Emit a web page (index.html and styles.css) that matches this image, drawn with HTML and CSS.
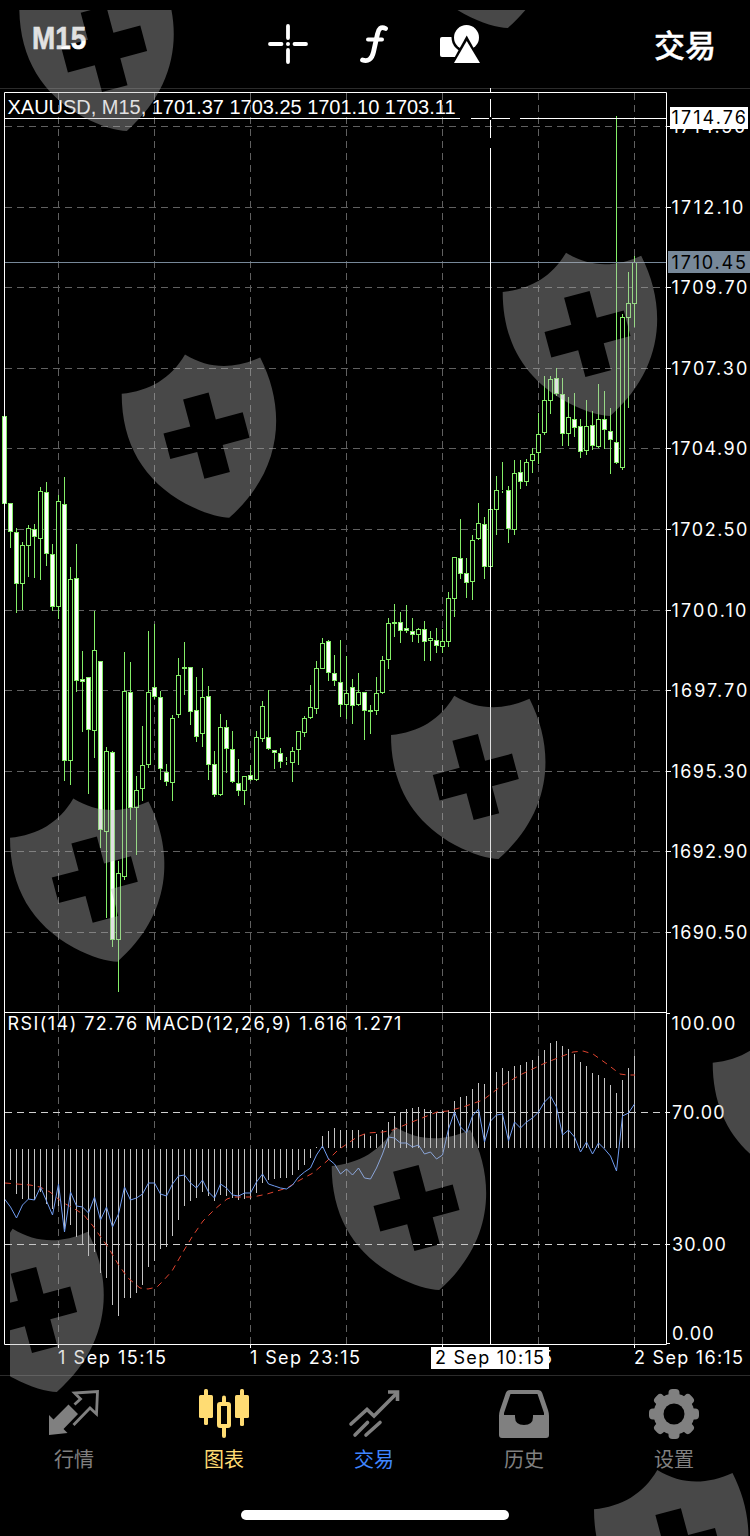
FILE: index.html
```html
<!DOCTYPE html>
<html lang="zh-CN">
<head>
    <meta charset="UTF-8">
    <meta name="viewport" content="width=device-width, initial-scale=1.0">
    <title>XAUUSD M15</title>
    <link rel="stylesheet" href="styles.css">
</head>
<body>
    <div class="app">
        <header class="header">
            <div class="timeframe">M15</div>
            <div class="tools">
                <svg class="tool-icon" width="40" height="40" viewBox="0 0 40 40">
                    <g stroke="#fff" stroke-width="3.8" stroke-linecap="round">
                        <path d="M20 1.9V14M20 26V38M2 20H13.5M26.5 20H38"/>
                    </g>
                    <circle cx="20" cy="20" r="2" fill="#fff"/>
                </svg>
                <svg class="tool-icon" width="30" height="40" viewBox="0 0 30 40">
                    <g fill="none" stroke="#fff" stroke-width="4.8" stroke-linecap="round">
                        <path d="M26.500 4.500C22 2 19.500 5 18.500 10L14.500 28C13 35 9 38 3.500 36"/>
                        <path d="M9 15.500H23" stroke-width="4"/>
                    </g>
                </svg>
                <svg class="tool-icon" width="42" height="40" viewBox="0 0 42 40">
                    <rect x="1" y="13" width="20" height="20" rx="2" fill="#fff"/>
                    <circle cx="27.500" cy="13.500" r="15" fill="#000"/>
                    <circle cx="27.500" cy="13.500" r="12.500" fill="#fff"/>
                    <path d="M27.700 11.500L43 39H12.500Z" fill="#000"/>
                    <path d="M27.700 17L41 39H15Z" fill="#fff"/>
                </svg>
            </div>
            <div class="trade">交易</div>
        </header>

        <main class="chart-area">
            <svg id="chart" class="chart" width="750" height="1286" viewBox="0 89 750 1286"></svg>
        </main>

        <nav class="tabs">
            <div class="tab">
                <svg width="52" height="50" viewBox="0 0 52 50">
                    <path d="M1 26L5.500 30.500L20.500 15.500L30 25L15.500 40L19.500 44L1 46Z" fill="#808080"/>
                    <path d="M26.500 15.500L32.500 10L26.500 4L49.500 2.500L48.500 25L42 19L25.500 36" fill="none" stroke="#808080" stroke-width="2.800"/>
                </svg>
                <span>行情</span>
            </div>
            <div class="tab active">
                <svg width="52" height="50" viewBox="0 0 52 50" fill="#ffdc73">
                    <rect x="1" y="6" width="14" height="23" rx="1.500"/>
                    <rect x="6" y="0" width="4" height="36" rx="1.500"/>
                    <rect x="37" y="6" width="14" height="23" rx="1.500"/>
                    <rect x="42" y="0" width="4" height="37" rx="1.500"/>
                    <path d="M24 8.500a2 2 0 0 1 4 0V47a2 2 0 0 1-4 0Z"/>
                    <rect x="21" y="15" width="10" height="22" rx="1" fill="#000" stroke="#ffdc73" stroke-width="4"/>
                </svg>
                <span>图表</span>
            </div>
            <div class="tab blue">
                <svg width="52" height="50" viewBox="0 0 52 50">
                    <g fill="none" stroke="#808080" stroke-width="3.600" stroke-linecap="round">
                        <path d="M3 35L19 20.500L26 27L49 4"/>
                        <path d="M40 3H49.500V12" stroke-linecap="butt"/>
                        <path d="M7 46L19.500 33.500M18 46L32 33.500"/>
                    </g>
                </svg>
                <span>交易</span>
            </div>
            <div class="tab">
                <svg width="52" height="50" viewBox="0 0 52 50">
                    <path fill="#808080" fill-rule="evenodd" d="M12 1H40Q43 1 44.200 4L50 21Q51 24 51 27V46Q51 49 48 49H4Q1 49 1 46V27Q1 24 2 21L7.800 4Q9 1 12 1ZM12.500 5L6 24V26H17V28Q17 36 26 36Q35 36 35 28V26H46V24L39.500 5Z"/>
                </svg>
                <span>历史</span>
            </div>
            <div class="tab">
                <svg id="gear" width="52" height="50" viewBox="0 0 52 50"></svg>
                <span>设置</span>
            </div>
        </nav>
        <div class="home-indicator"></div>

        <svg class="shields" width="750" height="1536" viewBox="0 0 750 1536">
            <defs>
                <clipPath id="edge"><rect x="10" y="10" width="740" height="1526"/></clipPath>
                <path id="shield" fill-rule="evenodd" d="M0 0C28-3 49-15 63.300-39.300C87-25 111-24 138.500-36.300C165 16 161 77 107.500 124C98 124 81 119 64 110C22 87 0 50 0 0ZM61.400 5.700L86.900-1.100L94.100 25.800L121 18.600L127.800 44.100L101 51.300L108.200 78.200L82.700 85L75.500 58.200L48.600 65.400L41.800 39.900L68.600 32.700Z"/>
            </defs>
            <g id="shieldLayer" clip-path="url(#edge)"></g>
        </svg>
    </div>

    <script>
        // [high, body top, body bottom, low, filled]
        const candles = [
            [416,416,503,503,1],[503,503,531,547,1],[528,532,583,612,1],[542,545,583,609,0],
            [525,528,545,576,0],[524,529,536,577,1],[487,491,538,579,0],[482,492,553,565,1],
            [544,554,606,610,1],[495,501,606,618,0],[477,504,760,780,1],[567,579,760,784,0],
            [544,578,680,691,1],[651,679,681,731,1],[677,677,729,793,1],[611,650,730,757,0],
            [661,661,829,847,1],[747,751,831,917,0],[751,752,939,946,1],[861,873,939,991,0],
            [652,691,876,879,0],[662,692,807,819,1],[776,790,807,854,0],[726,765,788,800,0],
            [631,692,764,767,0],[624,687,696,698,1],[691,697,768,779,1],[764,772,781,785,1],
            [715,718,782,800,0],[658,675,714,717,0],[642,667,668,694,1],[667,667,711,724,1],
            [677,710,736,741,1],[668,697,733,746,0],[686,696,764,779,1],[751,764,794,796,1],
            [714,727,794,795,0],[720,727,748,772,1],[731,749,781,782,1],[759,783,790,795,1],
            [776,776,790,804,0],[765,775,779,780,1],[731,737,779,780,0],[701,706,738,741,0],
            [690,737,748,749,1],[750,750,752,768,1],[748,753,761,767,1],[757,761,761,764,1],
            [747,751,762,781,0],[731,731,749,764,0],[716,718,732,736,0],[685,707,717,718,0],
            [661,668,708,713,0],[638,643,668,668,0],[640,641,672,680,1],[655,673,680,685,1],
            [640,682,704,716,1],[656,693,704,718,0],[679,687,705,723,1],[673,692,704,705,0],
            [692,692,710,739,1],[705,710,711,733,1],[677,693,710,714,0],[656,660,692,693,0],
            [618,623,659,668,0],[604,622,623,636,1],[612,622,630,642,1],[605,628,630,632,1],
            [618,631,634,641,1],[628,629,634,642,0],[621,629,641,660,1],[631,638,640,660,0],
            [628,640,645,652,1],[629,641,646,652,0],[592,598,641,646,0],[557,557,598,616,0],
            [519,558,573,578,1],[558,573,582,597,1],[535,540,581,599,0],[503,523,538,539,0],
            [517,524,566,578,1],[509,509,566,567,0],[476,490,509,534,0],[462,490,490,492,1],
            [486,490,528,542,1],[460,473,529,534,0],[460,472,481,488,1],[459,462,481,485,0],
            [448,454,460,472,0],[413,434,452,463,0],[376,400,432,434,0],[376,379,400,413,0],
            [368,378,393,395,1],[378,394,433,445,1],[397,417,433,445,0],[393,419,427,436,1],
            [419,426,451,457,1],[400,426,450,454,0],[411,425,445,449,1],[384,419,446,447,0],
            [391,419,429,448,1],[408,431,439,473,1],[116,442,462,463,1],[314,317,467,469,0],
            [272,303,317,407,0],[256,262,303,326,0]
        ];

        const rsi = [
            1199,1207,1218,1205,1199,1200,1187,1201,1215,1184,1232,1192,1206,1207,1213,1197,1220,1207,
            1227,1214,1187,1200,1198,1194,1183,1183,1194,1196,1184,1176,1175,1183,1188,1180,1192,1198,
            1184,1188,1195,1196,1193,1193,1182,1174,1184,1186,1188,1189,1185,1177,1172,1168,1155,1146,
            1159,1164,1174,1169,1175,1168,1178,1179,1168,1154,1137,1138,1143,1143,1147,1145,1154,1152,
            1159,1155,1129,1112,1127,1133,1116,1109,1142,1121,1115,1114,1141,1122,1128,1122,1118,1112,
            1102,1096,1107,1135,1130,1137,1152,1142,1154,1143,1149,1156,1171,1116,1113,1104
        ];

        // ends of the MACD bars, first bar is the second candle
        const macd = [
            1180,1194,1199,1199,1200,1192,1204,1209,1206,1229,1225,1237,1244,1256,1252,1273,1278,1305,
            1316,1298,1298,1293,1285,1267,1261,1249,1247,1236,1220,1206,1201,1198,1192,1196,1201,1195,
            1196,1198,1200,1199,1199,1193,1183,1180,1179,1178,1178,1175,1170,1165,1158,1147,1136,1131,
            1128,1130,1130,1130,1130,1134,1136,1134,1130,1122,1116,1112,1109,1108,1107,1109,1110,1112,
            1111,1110,1101,1097,1096,1089,1083,1084,1078,1072,1068,1071,1066,1065,1062,1060,1056,1050,
            1043,1041,1046,1049,1054,1062,1066,1073,1075,1078,1085,1093,1080,1068,1056
        ];

        const signal = [
            [5,1183],[17,1184],[30,1185],[40,1187],[50,1192],[62,1202],[73,1208],[83,1214],[93,1226],
            [100,1236],[108,1247],[118,1264],[128,1278],[140,1288],[148,1289],[157,1287],[163,1281],
            [172,1271],[183,1252],[192,1237],[203,1221],[215,1209],[227,1199],[233,1197],[253,1197],
            [267,1194],[287,1188],[300,1180],[313,1173],[327,1161],[338,1150],[347,1144],[357,1137],
            [367,1133],[383,1132],[393,1130],[407,1124],[427,1116],[437,1112],[448,1111],[463,1107],
            [483,1100],[500,1087],[520,1075],[543,1064],[560,1057],[573,1052],[583,1051],[593,1054],
            [607,1064],[620,1074],[627,1075],[635,1075]
        ];

        // [y, text, text width]
        const prices = [
            [126.5, '1714.50', 75], [207.5, '1712.10', 73], [287.5, '1709.70', 77], [368.5, '1707.30', 77],
            [448.5, '1704.90', 77], [529.5, '1702.50', 77], [610.5, '1700.10', 76], [690.5, '1697.70', 77],
            [771.5, '1695.30', 77], [851.5, '1692.90', 77], [932.5, '1690.50', 77]
        ];
        const columns = [58.5, 154.5, 250.5, 346.5, 442.5, 538.5, 634.5];
        const times = [
            [58.5, '1 Sep 15:15', 109], [250.5, '1 Sep 23:15', 111],
            [442.5, '2 Sep 08:15', 111], [634.5, '2 Sep 16:15', 110]
        ];

        const candleX = i => 4.5 + i * 6;
        const path = (cls, d) => `<path class="${cls}" d="${d}"/>`;
        const label = (cls, x, y, text, width) =>
            `<text class="${cls}" x="${x}" y="${y}"${width ? ` textLength="${width}"` : ''}>${text}</text>`;

        function drawGrid() {
            let out = '';
            prices.forEach(p => out += path('grid', `M5 ${p[0]}H666`));
            columns.forEach(x => out += path('grid', `M${x} 93V1012`) + path('grid', `M${x} 1013V1344`));
            out += path('level', 'M5 1112.5H666') + path('level', 'M5 1244.5H666');
            return out;
        }

        function drawCandles() {
            return candles.map((c, i) => {
                const x = candleX(i);
                const [high, top, bottom, low, filled] = c;
                const wick = path('wick', `M${x} ${high}V${top}M${x} ${bottom + 1}V${low + 1}`);
                return wick + `<rect class="${filled ? 'bear' : 'bull'}" x="${x - 2}" y="${top + 0.5}" width="4" height="${bottom - top}"/>`;
            }).join('');
        }

        function drawIndicators() {
            let bars = '';
            macd.forEach((y, i) => {
                bars += `M${candleX(i + 1)} ${y < 1149 ? 1148 : 1149}V${y}`;
            });
            return path('macd', bars) +
                path('signal', 'M' + signal.map(p => p.join(' ')).join('L')) +
                path('rsi', 'M' + rsi.map((y, i) => `${candleX(i)} ${y}`).join('L'));
        }

        function drawAxes() {
            let out = path('frame', 'M4.5 92.5H666.5V1344.5H4.5ZM4.5 1012.5H666.5');
            prices.forEach(p => {
                out += path('frame', `M667 ${p[0]}H671`) + label('axis', 671.5, p[0] + 6.5, p[1], p[2]);
            });
            out += path('frame', 'M667 1013.5H670M667 1112.5H670M667 1244.5H670M667 1343.5H670');
            out += label('axis', 671.5, 1030, '100.00', 65) + label('axis', 672, 1119, '70.00');
            out += label('axis', 672, 1251, '30.00') + label('axis', 672, 1340, '0.00');
            times.forEach(t => {
                out += path('frame', `M${t[0]} 1345V1348`) + label('axis', t[0] - 0.5, 1364, t[1], t[2]);
            });
            return out;
        }

        function drawMarkers() {
            let out = path('price-line', 'M5 262.5H666');
            out += path('frame', 'M5 118.5H460M471 118.5H489M492 118.5H510M520 118.5H666');
            out += path('frame', 'M490.5 88V92M490.5 99V117M490.5 120V138M490.5 148V1344');
            out += '<rect x="670" y="107" width="78" height="22" fill="#fff"/>';
            out += label('axis dark', 671.5, 124, '1714.76', 75.5);
            out += '<rect x="668" y="251" width="82" height="22" fill="#778899"/>';
            out += label('axis dark', 671.5, 269, '1710.45', 75.5);
            out += '<rect x="431" y="1347" width="118" height="22" fill="#fff"/>';
            out += label('axis dark', 435, 1364, '2 Sep 10:15', 110);
            return out;
        }

        function drawTitles() {
            return label('symbol', 7.5, 114, 'XAUUSD, M15, 1701.37 1703.25 1701.10 1703.11', 448) +
                label('axis', 7.5, 1030, 'RSI(14) 72.76 MACD(12,26,9) 1.616 1.271', 395);
        }

        document.getElementById('chart').innerHTML =
            drawGrid() + drawIndicators() + drawCandles() + drawAxes() + drawMarkers() + drawTitles();

        // gear with eight round teeth
        let gear = '<circle cx="26" cy="25" r="20.5" fill="#808080"/>';
        for (let i = 0; i < 8; i++) {
            gear += `<rect x="20.5" y="0" width="11" height="12" rx="4" fill="#808080" transform="rotate(${i * 45} 26 25)"/>`;
        }
        gear += '<circle cx="26" cy="25" r="10.5" fill="#000"/>';
        document.getElementById('gear').innerHTML = gear;

        const shields = [
            [19.3, 7], [400.3, -96], [502.7, 292], [121.7, 393.7], [391, 735], [10, 837.7],
            [331.7, 1166], [712.7, 1062.7], [-50.7, 1268], [594, 1509.3]
        ];
        document.getElementById('shieldLayer').innerHTML =
            shields.map(s => `<use href="#shield" x="${s[0]}" y="${s[1]}"/>`).join('');
    </script>
</body>
</html>
```
FILE: styles.css
```css
body {
    margin: 0;
    background: #000;
    color: #fff;
    font-family: Inter, "Noto Sans CJK SC", sans-serif;
}

.app {
    position: relative;
    width: 750px;
    height: 1536px;
    overflow: hidden;
    display: flex;
    flex-direction: column;
}

.header {
    height: 88px;
    border-bottom: 1px solid #2b2b2b;
    display: grid;
    grid-template-columns: 250px 1fr 250px;
    align-items: center;
}

.timeframe {
    padding: 0 0 12px 32px;
    font-family: "Liberation Sans", sans-serif;
    font-size: 32px;
    font-weight: bold;
    line-height: 40px;
    transform: scaleX(0.87);
    transform-origin: 32px 0;
    -webkit-text-stroke: 0.6px #fff;
}

.tools {
    display: flex;
    align-items: center;
    padding-left: 18px;
}

.tool-icon {
    flex: none;
}

.tool-icon:nth-child(2) {
    margin-left: 51px;
}

.tool-icon:nth-child(3) {
    margin-left: 50px;
}

.trade {
    padding-right: 34px;
    text-align: right;
    font-family: "Noto Sans CJK SC", sans-serif;
    font-size: 31px;
    font-weight: 500;
    line-height: 40px;
    -webkit-text-stroke: 0.4px #fff;
}

.chart-area {
    height: 1286px;
}

.chart {
    display: block;
    overflow: visible;
}

.chart path {
    fill: none;
    stroke-width: 1;
}

.chart .grid {
    stroke: #606060;
    stroke-dasharray: 7 5;
}

.chart .level {
    stroke: #d0d0d0;
    stroke-dasharray: 7 5;
}

.chart .frame {
    stroke: #fff;
}

.chart .wick {
    stroke: #84ee68;
}

.chart .bear {
    fill: #fff;
    stroke: #84ee68;
}

.chart .bull {
    fill: #000;
    stroke: #84ee68;
}

.chart .macd {
    stroke: #c4c4c4;
}

.chart .rsi {
    stroke: #6f9bf0;
}

.chart .signal {
    stroke: #e0432f;
    stroke-dasharray: 6 5;
}

.chart .price-line {
    stroke: #778899;
}

.chart .axis {
    fill: #fff;
    font-size: 18px;
    letter-spacing: 1.1px;
}

.chart .dark {
    fill: #000;
}

.chart .symbol {
    fill: #fff;
    font-family: "Liberation Sans", sans-serif;
    font-size: 20px;
}

.tabs {
    display: flex;
    height: 110px;
    border-top: 1px solid #2b2b2b;
}

.tab {
    flex: 1;
    display: flex;
    flex-direction: column;
    align-items: center;
    padding: 13px 2px 0 0;
    box-sizing: border-box;
    color: #808080;
    font-family: "Noto Sans CJK SC", sans-serif;
    font-size: 20px;
    line-height: 28px;
}

.tab svg {
    display: block;
    margin-bottom: 6px;
}

.tab.active {
    color: #ffdc73;
}

.tab.blue {
    color: #3f86ff;
}

.home-indicator {
    width: 268px;
    height: 10px;
    margin: 24px auto 0;
    border-radius: 5px;
    background: #fff;
}

.shields {
    position: absolute;
    left: 0;
    top: 0;
    fill: rgba(180, 180, 180, 0.4);
    pointer-events: none;
}
```
